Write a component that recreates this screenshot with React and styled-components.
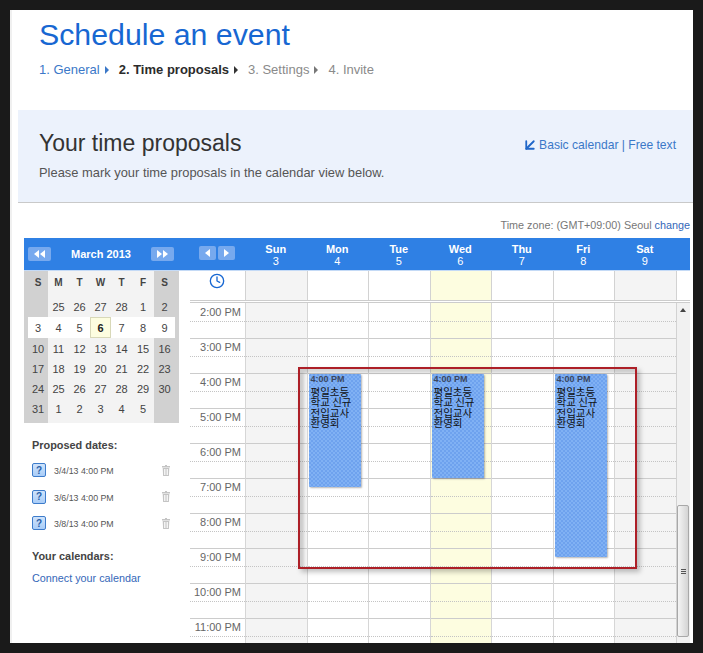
import React from 'react';
import styled, { createGlobalStyle } from 'styled-components';
import { ArrowDownLeft, Clock } from 'lucide-react';

const Global = createGlobalStyle`
  html, body { margin: 0; padding: 0; background: #1a1a1a; }
  body { font-family: "Liberation Sans", Arial, sans-serif; color: #444; }
`;

const Frame = styled.div`
  box-sizing: border-box;
  width: 683px;
  height: 633px;
  margin: 10px;
  background: #fff;
  border-left: 2px solid #f0f0f0;
  overflow: hidden;
`;

const Title = styled.h1`
  margin: 0;
  padding: 7px 0 0 27px;
  font-size: 30.3px;
  line-height: 36px;
  font-weight: 400;
  color: #1767d2;
`;

const Steps = styled.div`
  display: flex;
  align-items: center;
  padding: 9px 0 0 27px;
  height: 16px;
  font-size: 13px;
  line-height: 16px;
`;

const Step = styled.span`
  color: ${p => (p.$state === 'done' ? '#3b78c8' : p.$state === 'active' ? '#2b2b2b' : '#8a8a8a')};
  font-weight: ${p => (p.$state === 'active' ? 700 : 400)};
`;

const StepArrow = styled.i`
  width: 0;
  height: 0;
  margin: 0 10px 0 5px;
  border-left: 4px solid ${p => p.$color};
  border-top: 4px solid transparent;
  border-bottom: 4px solid transparent;
`;

const Panel = styled.section`
  display: flex;
  justify-content: space-between;
  box-sizing: border-box;
  height: 93px;
  margin: 32px 0 0 6px;
  padding: 19px 17px 0 21px;
  background: #ecf2fc;
  border-bottom: 1px solid #c9c9c9;
`;

const PanelHeading = styled.h2`
  margin: 0;
  font-size: 23px;
  line-height: 28px;
  font-weight: 400;
  color: #333;
`;

const PanelText = styled.p`
  margin: 8px 0 0;
  font-size: 12.9px;
  line-height: 16px;
  color: #555;
`;

const PanelLinks = styled.div`
  display: flex;
  align-items: center;
  height: 32px;
  font-size: 12.1px;
  color: #3b78c8;
`;

const TimeZone = styled.div`
  margin-top: 15px;
  padding-right: 3px;
  text-align: right;
  font-size: 10.8px;
  line-height: 14px;
  color: #777;
`;

const Link = styled.span`
  color: #3467b8;
`;

const Calendar = styled.div`
  display: flex;
  width: 666px;
  margin: 6px 0 0 12px;
`;

const Sidebar = styled.aside`
  width: 166px;
  flex: none;
`;

const BlueBar = styled.div`
  box-sizing: border-box;
  height: 33px;
  background: #2f80e4;
  border-bottom: 1px solid #c4daf6;
`;

const MonthBar = styled(BlueBar)`
  display: flex;
  align-items: center;
  justify-content: space-between;
  padding: 0 16px 0 4px;
  color: #fff;
  font-size: 11px;
  font-weight: 700;
`;

const NavButton = styled.span`
  display: inline-flex;
  align-items: center;
  justify-content: center;
  gap: 1px;
  width: ${p => p.$width}px;
  height: 14px;
  border-radius: 2px;
  background: #77a9ee;
`;

const Tri = styled.i`
  width: 0;
  height: 0;
  border-top: 4px solid transparent;
  border-bottom: 4px solid transparent;
  ${p => (p.$dir === 'left' ? 'border-right: 5px solid #fff;' : 'border-left: 5px solid #fff;')}
`;

const MiniGrid = styled.div`
  display: grid;
  box-sizing: border-box;
  width: 155px;
  height: 152px;
  padding: 0 4px;
  grid-template-columns: 20px 21px 21px 21px 21px 22px 21px;
  grid-template-rows: 25px 21px 21px 21px 20px 20px 20px;
  background: linear-gradient(90deg, #d1d1d1 24px, #f3f3f3 24px, #f3f3f3 130px, #d1d1d1 130px);
  font-size: 11px;
  color: #444;
`;

const WeekDay = styled.div`
  display: flex;
  align-items: center;
  justify-content: center;
  padding-bottom: 3px;
  font-size: 10px;
  font-weight: 700;
`;

const DayCell = styled.div`
  display: flex;
  align-items: center;
  justify-content: center;
  box-sizing: border-box;
  ${p => p.$week && 'background: #fff;'}
  ${p => p.$today && 'background: #fdfde0; border: 1px solid #d8d8b8; font-weight: 700; color: #222;'}
`;

const SideSection = styled.div`
  padding-left: 8px;
  width: 138px;
`;

const SideHeading = styled.div`
  margin-top: ${p => p.$top}px;
  font-size: 10.9px;
  line-height: 14px;
  font-weight: 700;
  color: #444;
`;

const DateList = styled.div`
  display: flex;
  flex-direction: column;
  gap: 12.5px;
  margin-top: 11px;
`;

const DateRow = styled.div`
  display: flex;
  align-items: center;
  height: 14px;
`;

const Help = styled.span`
  display: flex;
  align-items: center;
  justify-content: center;
  box-sizing: border-box;
  width: 14px;
  height: 14px;
  margin-right: 8px;
  border: 1px solid #3d7ccb;
  border-radius: 2px;
  background: linear-gradient(#cfe3fb, #a9cdf8);
  color: #2a5fa8;
  font-size: 10px;
  font-weight: 700;
`;

const DateText = styled.span`
  flex: 1;
  padding-top: 2px;
  font-size: 8.8px;
  color: #555;
`;

const ConnectLink = styled(Link)`
  display: block;
  margin-top: 8px;
  font-size: 10.8px;
  line-height: 14px;
  white-space: nowrap;
`;

const Schedule = styled.div`
  width: 500px;
  flex: none;
`;

const columns = '55px repeat(7, 61.5px) 14px';

const DaysBar = styled(BlueBar)`
  display: grid;
  grid-template-columns: ${columns};
`;

const DayNavs = styled.div`
  display: flex;
  gap: 2px;
  padding: 8px 0 0 9px;
`;

const DayHead = styled.div`
  padding-top: 5px;
  text-align: center;
  color: #fff;
  font-size: 11px;
  line-height: 12px;
  b { display: block; }
`;

const AllDayRow = styled.div`
  display: grid;
  grid-template-columns: ${columns};
  height: 32px;
  box-sizing: border-box;
  border-bottom: 3px double #ccc;
`;

const ClockCell = styled.div`
  display: flex;
  justify-content: center;
  padding: 2px 1px 0 0;
  color: #1767d2;
`;

const AllDayCell = styled.div`
  border-left: 1px solid #d2d2d2;
  background: ${p => p.$bg};
`;

const Body = styled.div`
  position: relative;
  display: grid;
  grid-template-columns: ${columns};
  grid-template-rows: 340px;
  height: 340px;
  overflow: hidden;
`;

const TimeCol = styled.div``;

const DayCol = styled.div`
  position: relative;
  border-left: 1px solid #d6d6d6;
  background: ${p => p.$bg};
`;

const Hour = styled.div`
  box-sizing: border-box;
  height: 35px;
  border-top: 1px solid #ccc;
  &:first-of-type { border-top-color: transparent; }
`;

const HalfHour = styled.div`
  box-sizing: border-box;
  height: 18px;
  padding-right: 4px;
  border-bottom: 1px dotted #c4c4c4;
  text-align: right;
  font-size: 11px;
  line-height: 16px;
  color: #666;
  white-space: nowrap;
`;

const Event = styled.div`
  position: absolute;
  top: 71px;
  left: 1px;
  box-sizing: border-box;
  width: 52px;
  height: ${p => p.$height}px;
  padding: 0 2px;
  border-radius: 1px;
  background-color: #74a8f0;
  background-image: conic-gradient(#80b1f4 25%, #6ea2ee 0 50%, #80b1f4 0 75%, #6ea2ee 0);
  background-size: 4px 4px;
  box-shadow: 1px 1px 2px rgba(0, 0, 0, 0.3);
`;

const EventTime = styled.div`
  font-size: 9px;
  line-height: 10.5px;
  font-weight: 700;
  color: #3a4660;
`;

const EventTitle = styled.div`
  margin-top: 2.2px;
  font-family: "Noto Sans CJK KR", "Liberation Sans", sans-serif;
  font-size: 10.5px;
  line-height: 10.6px;
  color: #111;
  white-space: pre;
`;

const Scrollbar = styled.div`
  display: flex;
  flex-direction: column;
  align-items: center;
  border-left: 1px solid #d2d2d2;
  background: #f1f1f1;
`;

const ScrollUp = styled.i`
  width: 0;
  height: 0;
  margin-top: 5px;
  border-left: 3px solid transparent;
  border-right: 3px solid transparent;
  border-bottom: 4px solid #444;
`;

const Thumb = styled.div`
  display: flex;
  flex-direction: column;
  align-items: center;
  justify-content: center;
  gap: 1px;
  box-sizing: border-box;
  width: 12px;
  height: 132px;
  margin: auto 0 6px;
  border: 1px solid #a8a8a8;
  border-radius: 2px;
  background: linear-gradient(90deg, #f4f4f4, #d4d4d4);
`;

const Grip = styled.i`
  width: 5px;
  height: 1px;
  background: #555;
`;

const Annotation = styled.div`
  position: absolute;
  left: 108px;
  top: 64px;
  box-sizing: border-box;
  width: 339px;
  height: 202px;
  border: 2px solid #ad1f27;
  box-shadow: 3px 3px 5px rgba(0, 0, 0, 0.25), inset 4px 4px 3px rgba(0, 0, 0, 0.16);
  pointer-events: none;
`;

const Trash = () => (
  <svg width="8" height="11" viewBox="0 0 8 11" fill="#c4c4c4">
    <path d="M3 0h2v1h3v1.5H0V1h3z" />
    <path d="M.7 3h6.6l-.4 8H1.1zM2 4v6h.8V4zm1.6 0v6h.8V4zm1.6 0v6H6V4z" fillRule="evenodd" />
  </svg>
);

const monthWeeks = [
  ['', 25, 26, 27, 28, 1, 2],
  [3, 4, 5, 6, 7, 8, 9],
  [10, 11, 12, 13, 14, 15, 16],
  [17, 18, 19, 20, 21, 22, 23],
  [24, 25, 26, 27, 28, 29, 30],
  [31, 1, 2, 3, 4, 5, ''],
];

const days = [
  { name: 'Sun', num: 3, bg: '#f4f4f4' },
  { name: 'Mon', num: 4, bg: '#fff', event: 113 },
  { name: 'Tue', num: 5, bg: '#fff' },
  { name: 'Wed', num: 6, bg: '#fdfde0', event: 104 },
  { name: 'Thu', num: 7, bg: '#fff' },
  { name: 'Fri', num: 8, bg: '#fff', event: 183 },
  { name: 'Sat', num: 9, bg: '#f4f4f4' },
];

const hours = ['2:00 PM', '3:00 PM', '4:00 PM', '5:00 PM', '6:00 PM', '7:00 PM', '8:00 PM', '9:00 PM', '10:00 PM', '11:00 PM'];
const proposed = ['3/4/13 4:00 PM', '3/6/13 4:00 PM', '3/8/13 4:00 PM'];

export default function App() {
  return (
    <>
      <Global />
      <Frame>
        <Title>Schedule an event</Title>
        <Steps>
          <Step $state="done">1. General</Step>
          <StepArrow $color="#3b78c8" />
          <Step $state="active">2. Time proposals</Step>
          <StepArrow $color="#333" />
          <Step>3. Settings</Step>
          <StepArrow $color="#777" />
          <Step>4. Invite</Step>
        </Steps>

        <Panel>
          <div>
            <PanelHeading>Your time proposals</PanelHeading>
            <PanelText>Please mark your time proposals in the calendar view below.</PanelText>
          </div>
          <PanelLinks>
            <ArrowDownLeft size={18} strokeWidth={2.4} color="#1f66c8" />
            <span>Basic calendar | Free text</span>
          </PanelLinks>
        </Panel>

        <TimeZone>
          Time zone: (GMT+09:00) Seoul <Link>change</Link>
        </TimeZone>

        <Calendar>
          <Sidebar>
            <MonthBar>
              <NavButton $width={23}><Tri $dir="left" /><Tri $dir="left" /></NavButton>
              March 2013
              <NavButton $width={23}><Tri /><Tri /></NavButton>
            </MonthBar>
            <MiniGrid>
              {['S', 'M', 'T', 'W', 'T', 'F', 'S'].map((d, i) => <WeekDay key={i}>{d}</WeekDay>)}
              {monthWeeks.map((week, w) =>
                week.map((d, i) => (
                  <DayCell key={`${w}-${i}`} $week={w === 1} $today={w === 1 && d === 6}>{d}</DayCell>
                ))
              )}
            </MiniGrid>
            <SideSection>
              <SideHeading $top={15}>Proposed dates:</SideHeading>
              <DateList>
                {proposed.map(p => (
                  <DateRow key={p}>
                    <Help>?</Help>
                    <DateText>{p}</DateText>
                    <Trash />
                  </DateRow>
                ))}
              </DateList>
              <SideHeading $top={19}>Your calendars:</SideHeading>
              <ConnectLink>Connect your calendar</ConnectLink>
            </SideSection>
          </Sidebar>

          <Schedule>
            <DaysBar>
              <DayNavs>
                <NavButton $width={17}><Tri $dir="left" /></NavButton>
                <NavButton $width={17}><Tri /></NavButton>
              </DayNavs>
              {days.map(d => (
                <DayHead key={d.name}>
                  <b>{d.name}</b>
                  {d.num}
                </DayHead>
              ))}
            </DaysBar>
            <AllDayRow>
              <ClockCell><Clock size={16} strokeWidth={2} /></ClockCell>
              {days.map(d => <AllDayCell key={d.name} $bg={d.bg} />)}
              <AllDayCell $bg="#fff" />
            </AllDayRow>
            <Body>
              <TimeCol>
                {hours.map(h => (
                  <Hour key={h}><HalfHour>{h}</HalfHour></Hour>
                ))}
              </TimeCol>
              {days.map(d => (
                <DayCol key={d.name} $bg={d.bg}>
                  {hours.map(h => (
                    <Hour key={h}><HalfHour /></Hour>
                  ))}
                  {d.event && (
                    <Event $height={d.event}>
                      <EventTime>4:00 PM</EventTime>
                      <EventTitle>{'평일초등\n학교 신규\n전입교사\n환영회'}</EventTitle>
                    </Event>
                  )}
                </DayCol>
              ))}
              <Scrollbar>
                <ScrollUp />
                <Thumb><Grip /><Grip /><Grip /></Thumb>
              </Scrollbar>
              <Annotation />
            </Body>
          </Schedule>
        </Calendar>
      </Frame>
    </>
  );
}
